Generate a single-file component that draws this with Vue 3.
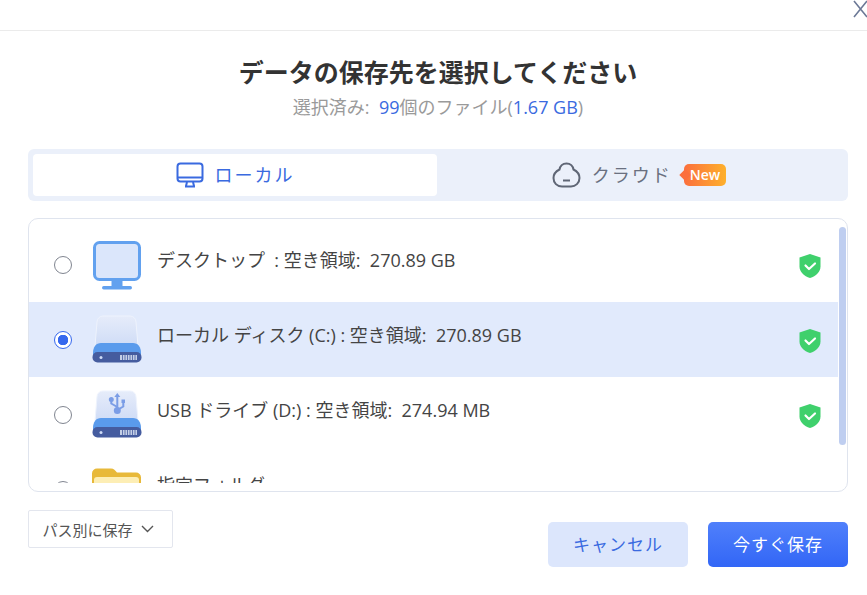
<script setup>
const rows = [
  { id: 'desk', icon: 'desk', label: 'デスクトップ\u00a0\u00a0: 空き領域:\u00a0\u00a0270.89 GB', shield: true },
  { id: 'c', icon: 'disk', label: 'ローカル ディスク (C:) : 空き領域:\u00a0\u00a0270.89 GB', shield: true, selected: true },
  { id: 'usb', icon: 'usb', label: 'USB ドライブ (D:) : 空き領域:\u00a0\u00a0274.94 MB', shield: true },
  { id: 'folder', icon: 'folder', label: '指定フォルダ', shield: false },
]
</script>

<template>
  <div class="page">
    <header class="topbar">
      <svg class="close" width="16" height="20" viewBox="0 0 16 20"><path d="M2 1l13 16M15 1L2 17" fill="none" stroke="#6b7896" stroke-width="1.6"/></svg>
    </header>

    <h1 class="title">データの保存先を選択してください</h1>
    <p class="sub">選択済み:&nbsp;&nbsp;<span class="blue">99</span>個のファイル(<span class="blue">1.67 GB</span>)</p>

    <div class="tabs">
      <div class="tab active">
        <svg width="28" height="26" viewBox="0 0 28 26" fill="none" stroke="#3a6ae0" stroke-width="2">
          <rect x="1.500" y="1.500" width="25" height="18" rx="3"/>
          <path d="M1.500 15.500h25"/>
          <path d="M9 24.500h10M11 20l-1 4M17 20l1 4"/>
        </svg>
        <span>ローカル</span>
      </div>
      <div class="tab">
        <svg width="29" height="26" viewBox="0 0 29 26" fill="none" stroke="#5f6675" stroke-width="2">
          <path d="M14.500 1.500c4 0 6.500 2.800 7 6 3.500 1.800 6 4.800 6 8.500 0 5-4 8.500-8.500 8.500H10C5 24.500 1.500 21 1.500 16c0-3.700 2.500-6.700 6-8.500.5-3.200 3-6 7-6z"/>
          <path d="M11 18.500h7"/>
        </svg>
        <span>クラウド</span>
        <span class="badge">New</span>
      </div>
    </div>

    <div class="list">
      <div class="scroller">
        <div v-for="r in rows" :key="r.id" class="row" :class="{ selected: r.selected }">
          <span class="radio" :class="{ on: r.selected }"></span>

          <svg v-if="r.icon === 'desk'" class="dev" width="50" height="52" viewBox="0 0 50 52">
            <rect x="2.500" y="3.500" width="45" height="37" rx="5" fill="#dbe6fb" stroke="#62a1ef" stroke-width="3"/>
            <path d="M19.500 42h11v5h-11z" fill="#62a1ef"/>
            <rect x="10" y="47" width="30" height="3.500" rx="1.700" fill="#62a1ef"/>
          </svg>

          <svg v-else-if="r.icon === 'disk' || r.icon === 'usb'" class="dev" width="50" height="50" viewBox="0 0 50 50">
            <defs>
              <linearGradient :id="'body-' + r.id" x1="0" y1="0" x2="0" y2="1">
                <stop offset="0" stop-color="#e6ecfa"/>
                <stop offset="1" stop-color="#cfdcf6"/>
              </linearGradient>
            </defs>
            <path d="M11 1h27a6 6 0 0 1 6 6l2 24H3L5 7a6 6 0 0 1 6-6z" :fill="'url(#body-' + r.id + ')'" stroke="#eef3fd" stroke-width="1"/>
            <path d="M1 38c0-6 3-10 8-10h32c5 0 8 4 8 10v2H1z" fill="#5a9bec"/>
            <rect x="0.500" y="37" width="49" height="10.500" rx="5" fill="#455c9f"/>
            <circle cx="9" cy="42.500" r="1.500" fill="#cfdcf7"/>
            <path d="M28 40h17v5H28z" fill="#c4cfe6"/>
            <path d="M30.500 40v5M33 40v5M35.500 40v5M38 40v5M40.500 40v5M43 40v5" stroke="#455c9f" stroke-width=".8"/>
            <g v-if="r.icon === 'usb'" fill="none" stroke="#7b9de6" stroke-width="2">
              <path d="M25.300 6v15"/>
              <path d="M25.300 17l-6-3.500v-3M25.300 20l6-3.500v-4"/>
              <circle cx="25.300" cy="20.500" r="2.500" fill="#7b9de6"/>
              <circle cx="19.300" cy="9.500" r="1.500" fill="#7b9de6"/>
              <path d="M29.500 9.500h3.500v3.500h-3.500z" fill="#7b9de6" stroke="none"/>
              <path d="M25.300 3l-3 4h6z" fill="#7b9de6" stroke="none"/>
            </g>
          </svg>

          <svg v-else class="dev" width="50" height="50" viewBox="0 0 50 50">
            <path d="M0 8.500a5 5 0 0 1 5-5h14c3 0 4 2 6 4h19a5 5 0 0 1 5 5v30H0z" fill="#e8b93a"/>
            <rect x="2" y="12" width="45" height="30" rx="3" fill="#fdeeb5"/>
          </svg>

          <span class="label">{{ r.label }}</span>

          <svg v-if="r.shield" class="shield" width="24" height="26" viewBox="0 0 24 26">
            <path d="M12 1l10.500 3.500v9c0 5.500-4.500 9.500-10.500 11.500C6 23 1.500 19 1.500 13.500v-9z" fill="#3fd06c"/>
            <path d="M7.500 12.500l3.500 3.500 6-5.500" fill="none" stroke="#fff" stroke-width="2.200" stroke-linecap="round" stroke-linejoin="round"/>
          </svg>
        </div>
      </div>
      <div class="track"><div class="thumb"></div></div>
    </div>

    <footer class="footer">
      <button class="mode">パス別に保存
        <svg width="13" height="8" viewBox="0 0 13 8"><path d="M1 1l5.500 5.500L12 1" fill="none" stroke="#555" stroke-width="1.400"/></svg>
      </button>
      <div class="actions">
        <button class="btn cancel">キャンセル</button>
        <button class="btn save">今すぐ保存</button>
      </div>
    </footer>
  </div>
</template>

<style scoped>
.page {
  width: 867px;
  height: 595px;
  box-sizing: border-box;
  padding: 0 19px 0 28px;
  background: #fff;
  font-family: "Open Sans", "Noto Sans CJK JP", sans-serif;
  color: #3c3c3c;
  overflow: hidden;
  position: relative;
}
.topbar {
  height: 30px;
  margin: 0 -19px 0 -28px;
  border-bottom: 1px solid #ebebeb;
}
.close { position: absolute; top: 0; right: -1px; }
.title {
  margin: 24px 0 0;
  height: 34px;
  line-height: 34px;
  text-align: center;
  font-size: 25px;
  font-weight: 700;
  color: #333;
}
.sub {
  margin: 5px 0 0;
  height: 26px;
  line-height: 26px;
  text-align: center;
  font-size: 18px;
  color: #9a9a9a;
}
.blue { color: #3a6ae0; }
.tabs {
  margin-top: 29px;
  height: 52px;
  box-sizing: border-box;
  padding: 5px;
  display: flex;
  background: #ebf0fa;
  border-radius: 6px;
}
.tab {
  flex: 1;
  display: flex;
  align-items: center;
  justify-content: center;
  gap: 11px;
  font-size: 18px;
  letter-spacing: 2px;
  color: #6a7080;
  border-radius: 4px;
}
.tab span:not(.badge) { position: relative; top: -1px; }
.tab.active {
  flex: 0 0 404px;
  background: #fff;
  color: #3a6ae0;
}
.badge {
  position: relative;
  margin: 0 2px 0 1px;
  padding: 0 6px;
  height: 22px;
  line-height: 22px;
  border-radius: 5px;
  background: linear-gradient(90deg, #fb6f3d, #feb02b);
  color: #fff;
  font-size: 14px;
  font-weight: 600;
  letter-spacing: 0;
}
.badge::before {
  content: "";
  position: absolute;
  left: -3px;
  top: 7px;
  width: 8px;
  height: 8px;
  background: #fb6f3d;
  transform: rotate(45deg);
}
.list {
  margin-top: 17px;
  height: 274px;
  box-sizing: border-box;
  padding: 8px 1px 8px 0;
  display: flex;
  border: 1px solid #dfe4ee;
  border-radius: 10px;
  overflow: hidden;
}
.scroller {
  flex: 1;
  overflow: hidden;
}
.row {
  height: 75px;
  box-sizing: border-box;
  display: flex;
  align-items: center;
  padding: 0 16px 0 25px;
  font-size: 18px;
  color: #444;
}
.row.selected { background: #e1eafc; }
.radio {
  width: 18px;
  height: 18px;
  box-sizing: border-box;
  border: 1px solid #808590;
  border-radius: 50%;
  background: #fff;
  flex: none;
}
.radio.on {
  border-color: #3568ee;
  background: radial-gradient(circle, #3568ee 0 5px, #fff 5.500px);
}
.dev { margin-left: 20px; flex: none; }
.label {
  margin-left: 15px;
  flex: 1;
  white-space: nowrap;
  position: relative;
  top: -6px;
}
.shield { flex: none; position: relative; top: 1px; }
.track {
  width: 7px;
  margin-left: 1px;
  flex: none;
}
.thumb {
  height: 218px;
  width: 7px;
  border-radius: 4px;
  background: #bfcef0;
}
.footer {
  margin-top: 18px;
  display: flex;
  justify-content: space-between;
  align-items: flex-start;
}
.mode {
  width: 145px;
  height: 38px;
  border: 1px solid #e3e6ee;
  border-radius: 2px;
  background: #fff;
  font: inherit;
  font-size: 15px;
  color: #555;
  display: flex;
  align-items: center;
  justify-content: center;
  gap: 8px;
  padding: 0 5px 0 0;
}
.actions {
  margin-top: 12px;
  display: flex;
  gap: 20px;
}
.btn {
  width: 140px;
  height: 45px;
  border: 0;
  border-radius: 5px;
  font: inherit;
  font-size: 17px;
  letter-spacing: 1px;
  padding: 0 0 3px;
}
.cancel { background: #dce6fc; color: #3a6ae0; }
.save { background: linear-gradient(180deg, #5080fb, #3266f6); color: #fff; }
</style>
